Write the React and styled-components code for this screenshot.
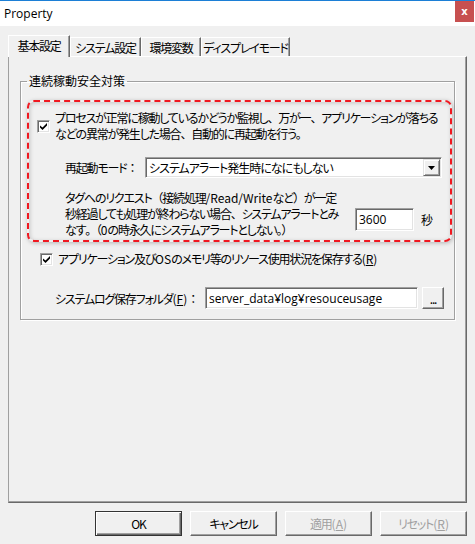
import styled, { createGlobalStyle } from 'styled-components'

const GlobalStyle = createGlobalStyle`
    html, body {
        margin: 0;
        padding: 0;
        background: #f0f0f0;
    }
    body {
        font-family: "Noto Sans CJK JP", "Noto Sans", sans-serif;
        font-size: 12px;
        color: #000;
        font-feature-settings: "palt";
        letter-spacing: -1.2px;
    }
`;

const Window = styled.div`
    width: 475px;
    height: 544px;
    box-sizing: border-box;
    border-top: 1px solid #1c7fd6;
    display: flex;
    flex-direction: column;
    background: #f0f0f0;
    overflow: hidden;
`;

const TitleBar = styled.div`
    height: 25px;
    flex: none;
    background: #fff;
    display: flex;
    align-items: center;
    padding-left: 4px;
`;

const Title = styled.span`
    font-family: "Open Sans", "Noto Sans", sans-serif;
    font-size: 12px;
    letter-spacing: 0;
`;

const CloseButton = styled.div`
    margin-left: auto;
    margin-right: 1px;
    align-self: flex-start;
    width: 19px;
    height: 21px;
    background: #c75050;
    color: #fff;
    font-family: "DejaVu Sans", sans-serif;
    font-weight: bold;
    font-size: 10px;
    letter-spacing: 0;
    display: flex;
    align-items: center;
    justify-content: center;
`;

const Body = styled.div`
    padding: 9px 8px 0 8px;
    display: flex;
    flex-direction: column;
`;

const TabBar = styled.div`
    display: flex;
    align-items: flex-end;
    height: 21px;
`;

const Tab = styled.div`
    box-sizing: border-box;
    width: ${p => p.$w}px;
    height: ${p => (p.$active ? 22 : 19)}px;
    margin-bottom: ${p => (p.$active ? -1 : 0)}px;
    position: relative;
    z-index: ${p => (p.$active ? 1 : 0)};
    background: #f0f0f0;
    border-top: 1px solid #fff;
    border-left: 1px solid #fff;
    border-right: 1px solid #696969;
    box-shadow: inset -1px 0 #a0a0a0;
    display: flex;
    align-items: center;
    justify-content: center;
    padding-bottom: ${p => (p.$active ? 2 : 0)}px;
    white-space: nowrap;
`;

const Panel = styled.div`
    box-sizing: border-box;
    height: 447px;
    border: 1px solid;
    border-color: #fff #696969 #696969 #a0a0a0;
    box-shadow: inset -1px -1px #a0a0a0;
    padding: 16px 11px 0 11px;
`;

const GroupBox = styled.fieldset`
    margin: 0;
    padding: 0 0 10px 0;
    border: 1px solid #a0a0a0;
    box-shadow: inset 1px 1px #fff, 1px 1px #fff;
    min-width: 0;
`;

const Legend = styled.legend`
    margin-left: 6px;
    padding: 0 2px;
    line-height: 16px;
    letter-spacing: 0;
`;

const DashedFrame = styled.div`
    margin: 11px 2px 0 6px;
    border: 2px dashed #f01820;
    border-radius: 7px;
    padding: 8px 8px 2px 8px;
    box-shadow: 1px 1px 4px rgba(0, 0, 0, 0.25), inset 1px 1px 4px rgba(0, 0, 0, 0.18);
`;

const CheckRow = styled.div`
    display: flex;
    align-items: center;
    gap: 5px;
    margin: ${p => p.$m || '0'};
    line-height: 16px;
    white-space: nowrap;
`;

const Box = styled.span`
    flex: none;
    box-sizing: border-box;
    width: 13px;
    height: 13px;
    background: #fff;
    border: 1px solid;
    border-color: #a0a0a0 #fff #fff #a0a0a0;
    box-shadow: inset 1px 1px #696969, inset -1px -1px #e3e3e3;
    display: flex;
    align-items: center;
    justify-content: center;
`;

const Checkbox = () => (
    <Box>
        <svg width="7" height="7" viewBox="0 0 7 7">
            <path d="M0 2.5 L0 4.5 L2.5 7 L7 2.5 L7 0 L2.5 4.5 Z" fill="#000" />
        </svg>
    </Box>
);

const FieldRow = styled.div`
    display: flex;
    align-items: center;
    margin: ${p => p.$m || '0'};
    white-space: nowrap;
`;

const Label = styled.span`
    width: ${p => p.$w}px;
    flex: none;
`;

const Sunken = styled.div`
    box-sizing: border-box;
    width: ${p => p.$w}px;
    height: ${p => p.$h || 22}px;
    margin-top: ${p => p.$mt || 0}px;
    background: #fff;
    border: 1px solid;
    border-color: #a0a0a0 #fff #fff #a0a0a0;
    box-shadow: inset 1px 1px #696969, inset -1px -1px #e3e3e3;
    display: flex;
    align-items: center;
    padding-left: 3px;
    flex: none;
`;

const Value = styled.span`
    font-family: "Open Sans", "Noto Sans CJK JP", sans-serif;
    letter-spacing: ${p => (p.$jp ? '-1px' : '0')};
    flex: 1;
`;

const Latin = styled.span`
    letter-spacing: 0;
`;

/* full-width punctuation, kept at its normal width */
const Full = styled.span`
    font-feature-settings: normal;
`;

const DropButton = styled.span`
    box-sizing: border-box;
    width: 17px;
    height: 17px;
    margin-right: 1px;
    background: #f0f0f0;
    border: 1px solid;
    border-color: #e3e3e3 #696969 #696969 #e3e3e3;
    box-shadow: inset 1px 1px #fff, inset -1px -1px #a0a0a0;
    display: flex;
    align-items: center;
    justify-content: center;
`;

const Para = styled.div`
    line-height: 16px;
    width: 290px;
    white-space: nowrap;
`;

const Unit = styled.span`
    margin: 10px 0 0 7px;
`;

const RaisedButton = styled.div`
    box-sizing: border-box;
    width: ${p => p.$w}px;
    height: ${p => p.$h}px;
    margin-left: ${p => p.$ml || 0}px;
    flex: none;
    background: #f0f0f0;
    border: 1px solid;
    border-color: ${p => (p.$primary ? '#333' : '#fff #696969 #696969 #fff')};
    box-shadow: ${p => (p.$primary
        ? 'inset 1px 1px #fff, inset -1px -1px #696969, inset -2px -2px #a0a0a0'
        : 'inset -1px -1px #a0a0a0')};
    color: ${p => (p.$disabled ? '#a0a0a0' : '#000')};
    display: flex;
    align-items: center;
    justify-content: center;
    white-space: nowrap;
`;

const ButtonRow = styled.div`
    display: flex;
    justify-content: flex-end;
    gap: 8px;
    margin-top: 8px;
`;

const U = styled.span`
    text-decoration: underline;
`;

export default function App() {
    return (
        <Window>
            <GlobalStyle />
            <TitleBar>
                <Title>Property</Title>
                <CloseButton>x</CloseButton>
            </TitleBar>
            <Body>
                <TabBar>
                    <Tab $w={62} $active>基本設定</Tab>
                    <Tab $w={71}>システム設定</Tab>
                    <Tab $w={60}>環境変数</Tab>
                    <Tab $w={89}>ディスプレイモード</Tab>
                </TabBar>
                <Panel>
                    <GroupBox>
                        <Legend>連続稼動安全対策</Legend>
                        <DashedFrame>
                            <CheckRow>
                                <Checkbox />
                                <span>
                                    プロセスが正常に稼動しているかどうか監視し<Full>、</Full>万が一<Full>、</Full>アプリケーションが落ちる<br />
                                    などの異常が発生した場合<Full>、</Full>自動的に再起動を行う<Full>。</Full>
                                </span>
                            </CheckRow>
                            <FieldRow $m="15px 0 0 28px">
                                <Label $w={80}>再起動モード<Full>：</Full></Label>
                                <Sunken $w={297} $h={21}>
                                    <Value $jp>システムアラート発生時になにもしない</Value>
                                    <DropButton>
                                        <svg width="7" height="4" viewBox="0 0 7 4">
                                            <path d="M0 0 H7 L3.5 4 Z" fill="#000" />
                                        </svg>
                                    </DropButton>
                                </Sunken>
                            </FieldRow>
                            <FieldRow $m="12px 0 0 28px">
                                <Para>
                                    タグへのリクエスト<Full>（</Full>接続処理<Latin>/Read/Write</Latin>など<Full>）</Full>が一定<br />
                                    秒経過しても処理が終わらない場合<Full>、</Full>システムアラートとみ<br />
                                    なす<Full>。（</Full><Latin>0</Latin>の時永久にシステムアラートとしない<Full>。）</Full>
                                </Para>
                                <Sunken $w={59} $h={23} $mt={10}>
                                    <Value>3600</Value>
                                </Sunken>
                                <Unit>秒</Unit>
                            </FieldRow>
                        </DashedFrame>
                        <CheckRow $m="9px 0 0 19px">
                            <Checkbox />
                            <span>アプリケーション及び<Latin>OS</Latin>のメモリ等のリソース使用状況を保存する<Latin>(<U>R</U>)</Latin></span>
                        </CheckRow>
                        <FieldRow $m="20px 0 0 34px">
                            <Label $w={150}>システムログ保存フォルダ<Latin>(<U>F</U>)</Latin><Full>：</Full></Label>
                            <Sunken $w={213}>
                                <Value>server_data¥log¥resouceusage</Value>
                            </Sunken>
                            <RaisedButton $w={22} $h={22} $ml={4}>...</RaisedButton>
                        </FieldRow>
                    </GroupBox>
                </Panel>
                <ButtonRow>
                    <RaisedButton $w={87} $h={25} $primary>OK</RaisedButton>
                    <RaisedButton $w={87} $h={25}>キャンセル</RaisedButton>
                    <RaisedButton $w={87} $h={25} $disabled>適用<Latin>(<U>A</U>)</Latin></RaisedButton>
                    <RaisedButton $w={87} $h={25} $disabled>リセット<Latin>(<U>R</U>)</Latin></RaisedButton>
                </ButtonRow>
            </Body>
        </Window>
    );
}
